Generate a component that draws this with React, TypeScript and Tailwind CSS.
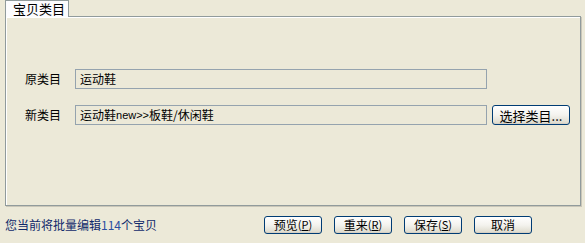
const FONT = "font-['SimSun','Noto_Sans_CJK_SC',sans-serif]";

function XpButton({ label, hotkey, className = '' }: { label: string; hotkey?: string; className?: string }) {
  return (
    <button
      className={`flex items-center justify-center rounded-[3px] border border-[#003c74] bg-gradient-to-b from-white via-[#f4f3ee] to-[#dcd9cb] text-[12px] leading-none text-black shadow-[inset_0_-1px_0_#d6d0c5] ${className}`}
    >
      {label}
      {hotkey && (
        <span className="text-[11px]">
          (<span className="underline">{hotkey}</span>)
        </span>
      )}
    </button>
  );
}

function FieldRow({ label, value, children }: { label: string; value: React.ReactNode; children?: React.ReactNode }) {
  return (
    <div className="flex items-center h-[20px]">
      <span className="w-[50px] text-[12px] text-black">{label}</span>
      <div className="w-[412px] h-[20px] border border-[#95a3ae] bg-[#ece9d8] flex items-center pl-[4px] text-[12px] text-black">
        {value}
      </div>
      {children}
    </div>
  );
}

export default function App() {
  return (
    <div className={`w-[585px] h-[243px] bg-[#ece9d8] overflow-hidden ${FONT}`}>
      {/* tab */}
      <div className="pl-[5px] h-[16px] flex">
        <div className="relative z-10 w-[64px] h-[17px] bg-[#fcfcfe] border border-b-0 border-[#919b9c] pl-[7px] text-[13px] leading-[15px] text-black">
          宝贝类目
        </div>
      </div>

      {/* panel */}
      <div className="ml-[5px] w-[576px] h-[190px] border border-[#919b9c] bg-[#ece9d8] shadow-[inset_1px_1px_0_#fff,1px_1px_0_#c9c6b8] pl-[19px] pt-[52px]">
        <FieldRow label="原类目" value="运动鞋" />
        <div className="h-[16px]" />
        <FieldRow
          label="新类目"
          value={
            <>
              运动鞋<span className="font-['Liberation_Sans',sans-serif] text-[11px]">new&gt;&gt;</span>板鞋/休闲鞋
            </>
          }
        >
          <XpButton label="选择类目..." className="ml-[5px] w-[78px] h-[20px] text-[13px]" />
        </FieldRow>
      </div>

      {/* footer */}
      <div className="flex items-center h-[37px] pl-[5px]">
        <span className="w-[259px] text-[12px] text-[#10296b]">
          您当前将批量编辑<span className="text-[#2a4ea0]">114</span>个宝贝
        </span>
        <div className="flex gap-[12px]">
          <XpButton label="预览" hotkey="P" className="w-[58px] h-[18px]" />
          <XpButton label="重来" hotkey="R" className="w-[58px] h-[18px]" />
          <XpButton label="保存" hotkey="S" className="w-[58px] h-[18px]" />
          <XpButton label="取消" className="w-[58px] h-[18px]" />
        </div>
      </div>
    </div>
  );
}
